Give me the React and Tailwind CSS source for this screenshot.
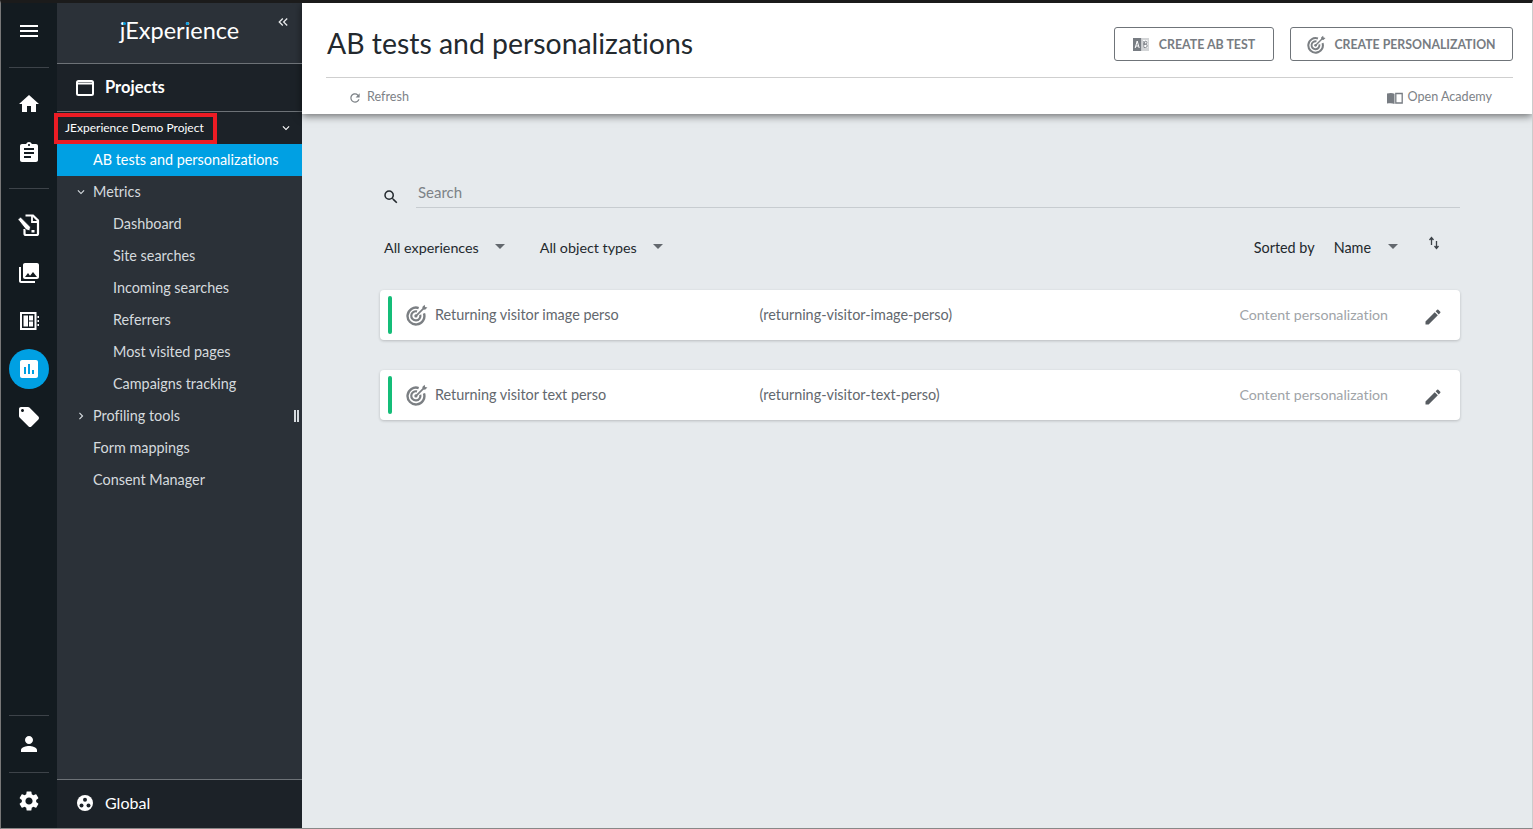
import React from "react";
import {
  MdMenu,
  MdHome,
  MdAssignment,
  MdPhotoLibrary,
  MdAssessment,
  MdLocalOffer,
  MdPerson,
  MdSettings,
  MdKeyboardArrowDown,
  MdKeyboardArrowRight,
  MdKeyboardDoubleArrowLeft,
  MdSearch,
  MdRefresh,
  MdArrowDropDown,
  MdEdit,
} from "react-icons/md";

const font = "font-['Lato','Open_Sans',sans-serif] [font-variant-ligatures:none]";

const TargetIcon = ({ className }) => (
  <svg viewBox="0 0 24 24" className={className} fill="none" stroke="currentColor">
    <path d="M19.600 10.200a9.200 9.200 0 1 1-5.800-5.800" strokeWidth="2.600" />
    <path d="M15.600 11.800a5 5 0 1 1-3.600-3.700" strokeWidth="2.400" />
    <circle cx="10.800" cy="13" r="1.700" fill="currentColor" stroke="none" />
    <path d="M11 13 19.500 4.500" strokeWidth="1.800" />
    <path d="M17.800 3.200l.5 2.500 2.500.5 2.600-2.400-2.500-.6-.6-2.400z" fill="currentColor" stroke="none" />
  </svg>
);

const AbIcon = () => (
  <svg viewBox="0 0 16 13" className="w-4 h-[13px] shrink-0">
    <rect width="8.500" height="13" fill="#777c82" />
    <rect x="8.500" width="7.500" height="13" fill="#d3d5d7" />
    <rect x="10" y="2" width="4.500" height="8" fill="#fff" />
    <path d="M2.200 10 4.200 3l2 7M3 8h2.400" stroke="#fff" strokeWidth="1" fill="none" />
    <path d="M10.800 3v6.500h1.700a1.600 1.600 0 0 0 0-3.300h-1.700m0 0h1.500a1.600 1.600 0 0 0 0-3.200z" stroke="#777c82" strokeWidth="0.900" fill="none" />
  </svg>
);

const NoteEditIcon = () => (
  <svg viewBox="0 0 24 24" className="w-6 h-6" fill="none">
    <path d="M8.500 2.500h7.500l5 5v13a1.500 1.500 0 0 1-1.500 1.500H9A1.500 1.500 0 0 1 7.500 20.500V16" stroke="#fff" strokeWidth="2.200" />
    <path d="M15 3v6h6" stroke="#fff" strokeWidth="1.800" />
    <path d="M1 6.500 3.500 4l10 10-.8 3.800-3.700-1z" fill="#fff" stroke="#131b20" strokeWidth="0.800" />
    <rect x="14.500" y="17" width="3" height="2.500" fill="#fff" />
  </svg>
);

const DashIcon = () => (
  <svg viewBox="0 0 24 24" className="w-6 h-6" fill="#fff">
    <path fillRule="evenodd" d="M3 3h16.500v18H3zM5 5v14h12.500V5z" />
    <path d="M6.500 6.500h4.500v11H6.500zM12 6.500h4v5h-4zM12 12.500h4v5h-4z" />
    <path d="M20.500 7H22v2h-1.500zM20.500 11H22v2h-1.500zM20.500 15H22v2h-1.500z" />
  </svg>
);

const BookIcon = () => (
  <svg viewBox="0 0 16 12" className="w-4 h-3 shrink-0 mt-0.5">
    <path d="M0 1.500C3 .8 5.500 .8 7.500 1.800V12C5.500 11 3 11 0 11.500z" fill="#777c82" />
    <path d="M8.800 1.500h6.400v9.500H8.800z" fill="none" stroke="#777c82" strokeWidth="1.300" />
  </svg>
);

const SortIcon = () => (
  <svg viewBox="0 0 12 14" className="w-3 h-3.5" fill="none" stroke="#3c4248" strokeWidth="1.300">
    <path d="M3.500 9V2M1.500 4l2-2.500L5.500 4" />
    <path d="M8.500 5v7M6.500 10l2 2.500 2-2.500" />
  </svg>
);

const ProjectsIcon = () => (
  <svg viewBox="0 0 18 16" className="w-[18px] h-4 shrink-0" fill="none">
    <rect x="1" y="1" width="16" height="14" rx="1.500" stroke="#fff" strokeWidth="2" />
    <path d="M1 3.500h16" stroke="#fff" strokeWidth="2" />
  </svg>
);

const GlobalIcon = () => (
  <svg viewBox="0 0 16 16" className="w-4 h-4 shrink-0">
    <circle cx="8" cy="8" r="8" fill="#fff" />
    <circle cx="8" cy="4.800" r="2" fill="#1c2228" />
    <circle cx="4.500" cy="10.500" r="2" fill="#1c2228" />
    <circle cx="11.500" cy="10.500" r="2" fill="#1c2228" />
  </svg>
);

const railIcon = "w-6 h-6 text-white";

const MenuRow = ({ label, indent, active, arrow, children }) => (
  <div
    className={`relative h-8 shrink-0 flex items-center text-[14.400px] ${
      active ? "bg-[#00a0e3] text-white" : "text-[#d5dade]"
    } ${indent ? "pl-14" : "pl-9"}`}
  >
    {arrow === "down" && <MdKeyboardArrowDown className="absolute left-[17px] w-[14px] h-[14px]" />}
    {arrow === "right" && <MdKeyboardArrowRight className="absolute left-[17px] w-[14px] h-[14px]" />}
    {label}
    {children}
  </div>
);

const Card = ({ name, id }) => (
  <div className="h-[50px] bg-white rounded-sm shadow-[0_1px_3px_rgba(0,0,0,0.2)] flex items-center pl-2 pr-[17px]">
    <div className="w-1 h-[38px] bg-[#14bd78] rounded-sm shrink-0" />
    <TargetIcon className="w-[22px] h-[22px] text-[#7b7f83] ml-[14px] shrink-0" />
    <div className="w-[324.500px] ml-[7px] -mt-px text-[14.400px] text-[#63686e] shrink-0">{name}</div>
    <div className="-mt-px text-[14.400px] text-[#63686e]">{id}</div>
    <div className="ml-auto -mt-px text-[14.200px] text-[#a0a4a8]">Content personalization</div>
    <MdEdit className="w-5 h-5 text-[#575c61] ml-[35px] mt-1" />
  </div>
);

const Dropdown = ({ label, gap }) => (
  <div className="flex items-center text-[14.300px] text-[#23292e]">
    {label}
    <MdArrowDropDown className={`w-6 h-6 text-[#63686e] -mt-1 ${gap}`} />
  </div>
);

export default function App() {
  return (
    <div className={`relative h-[829px] w-full flex flex-col overflow-hidden bg-[#e6eaed] border-t-[3px] border-t-[#1b1b1b] border-l border-l-[#777] border-b border-b-[#888] border-r border-r-[#ccc] ${font}`}>
      <div className="flex flex-1 min-h-0">
        {/* icon rail */}
        <div className="w-14 shrink-0 bg-[#131b20] flex flex-col items-center">
          <div className="h-[56px] flex items-center justify-center">
            <MdMenu className="w-6 h-6 text-white" />
          </div>
          <div className="w-10 h-px mt-2 bg-[#3d4349]" />
          <div className="h-12 mt-3 flex items-center justify-center"><MdHome className={railIcon} /></div>
          <div className="h-12 pt-0.5 flex items-center justify-center"><MdAssignment className={railIcon} /></div>
          <div className="w-10 h-px mt-3 bg-[#3d4349]" />
          <div className="h-12 mt-3 flex items-center justify-center"><NoteEditIcon /></div>
          <div className="h-12 flex items-center justify-center"><MdPhotoLibrary className={railIcon} /></div>
          <div className="h-12 flex items-center justify-center"><DashIcon /></div>
          <div className="h-12 flex items-center justify-center">
            <div className="w-10 h-10 rounded-full bg-[#00a0e3] flex items-center justify-center">
              <MdAssessment className={railIcon} />
            </div>
          </div>
          <div className="h-12 flex items-center justify-center"><MdLocalOffer className={railIcon} /></div>
          <div className="mt-auto w-10 h-px bg-[#3d4349]" />
          <div className="h-14 flex items-center justify-center"><MdPerson className={railIcon} /></div>
          <div className="w-10 h-px bg-[#3d4349]" />
          <div className="h-[55px] pt-px flex items-center justify-center"><MdSettings className={railIcon} /></div>
        </div>

        {/* menu column */}
        <div className="w-[245px] shrink-0 bg-[#2b3138] flex flex-col">
          <div className="relative h-[60px] shrink-0 border-b border-[#6d7277] box-content flex items-center justify-center">
            <span className="relative text-[23.500px] leading-none text-white font-normal -mt-1">
              jExperience
              <span className="absolute left-[3px] top-[3px] w-[3px] h-[3px] rounded-full bg-[#00a0e3]" />
              <span className="absolute left-[66px] top-[3px] w-[3px] h-[3px] rounded-full bg-[#00a0e3]" />
            </span>
            <MdKeyboardDoubleArrowLeft className="absolute right-[11px] top-[11px] w-4 h-4 text-[#e8eaec]" />
          </div>
          <div className="h-[47px] shrink-0 bg-[#1c2228] border-b border-[#6d7277] box-content flex items-center pl-[19px] gap-[11px] text-white font-bold text-[16.500px]">
            <ProjectsIcon />
            Projects
          </div>
          <div className="h-8 shrink-0 bg-[#1c2228] flex items-center justify-between pl-2 pr-[9px] text-[12px] text-white">
            JExperience Demo Project
            <MdKeyboardArrowDown className="w-[14px] h-[14px]" />
          </div>
          <MenuRow label="AB tests and personalizations" active />
          <MenuRow label="Metrics" arrow="down" />
          <MenuRow label="Dashboard" indent />
          <MenuRow label="Site searches" indent />
          <MenuRow label="Incoming searches" indent />
          <MenuRow label="Referrers" indent />
          <MenuRow label="Most visited pages" indent />
          <MenuRow label="Campaigns tracking" indent />
          <MenuRow label="Profiling tools" arrow="right">
            <div className="absolute right-[3px] top-[10px] w-[5px] h-3 border-x-2 border-[#d5dade]" />
          </MenuRow>
          <MenuRow label="Form mappings" />
          <MenuRow label="Consent Manager" />
          <div className="mt-auto h-[46px] pb-0.5 shrink-0 bg-[#1c2228] border-t border-[#6d7277] box-content flex items-center pl-5 gap-3 text-white text-[16px]">
            <GlobalIcon />
            Global
          </div>
        </div>

        {/* main */}
        <div className="flex-1 min-w-0 flex flex-col">
          <div className="h-[111px] shrink-0 bg-white shadow-[0_2px_8px_rgba(0,0,0,0.55)] pl-6 pr-[19px] flex flex-col">
            <div className="h-[66px] pt-2 shrink-0 border-b border-[#cfcfcf] box-content flex items-center justify-between">
              <h1 className="ml-px text-[28.400px] font-normal text-[#23292e] leading-none -mt-0.5">AB tests and personalizations</h1>
              <div className="flex items-center gap-4">
                <button className="w-40 h-[34px] rounded-[3px] border border-[#6f7479] flex items-center justify-center gap-[10px] text-[12.400px] font-bold text-[#777c82]">
                  <AbIcon />
                  <span className="mt-0.5">CREATE AB TEST</span>
                </button>
                <button className="w-[223px] h-[34px] rounded-[3px] border border-[#6f7479] flex items-center justify-center gap-2 text-[12.300px] font-bold text-[#777c82]">
                  <TargetIcon className="w-[19px] h-[19px] text-[#7b7f83]" />
                  <span className="mt-0.5">CREATE PERSONALIZATION</span>
                </button>
              </div>
            </div>
            <div className="flex-1 pt-0.5 flex items-center justify-between pl-[22px] pr-[21px] text-[12.600px] text-[#7d8287]">
              <div className="flex items-center gap-[5px]">
                <MdRefresh className="w-[14px] h-[14px] mt-0.5" />
                Refresh
              </div>
              <div className="flex items-center gap-[4px]">
                <BookIcon />
                Open Academy
              </div>
            </div>
          </div>

          <div className="flex-1 pl-[78px] pr-[72px] pt-[66px]">
            <div className="flex items-end">
              <MdSearch className="w-[18px] h-[18px] text-[#23292e] mb-[2px] ml-[2px]" />
              <div className="flex-1 ml-4 h-7 border-b border-[#c7ccd0] pl-[2px] pt-[2px] text-[15px] leading-5 text-[#7d8287]">Search</div>
            </div>
            <div className="h-[82px] flex items-center pl-1 pb-0.5">
              <Dropdown label="All experiences" gap="ml-[9px]" />
              <div className="ml-[28px]"><Dropdown label="All object types" gap="ml-[9px]" /></div>
              <div className="ml-auto flex items-center text-[14.400px] text-[#23292e]">
                <span>Sorted by</span>
                <span className="ml-[19px]">Name</span>
                <MdArrowDropDown className="w-6 h-6 text-[#63686e] -mt-1 ml-[10px]" />
                <div className="ml-[23px] mr-[20px] -mt-2.5"><SortIcon /></div>
              </div>
            </div>
            <div className="flex flex-col gap-[30px]">
              <Card name="Returning visitor image perso" id="(returning-visitor-image-perso)" />
              <Card name="Returning visitor text perso" id="(returning-visitor-text-perso)" />
            </div>
          </div>
        </div>
      </div>

      {/* red highlight drawn over the screenshot */}
      <div className="absolute left-[53px] top-[110px] w-[163px] h-[31px] border-[4px] border-[#ed1c24] pointer-events-none" />
    </div>
  );
}
